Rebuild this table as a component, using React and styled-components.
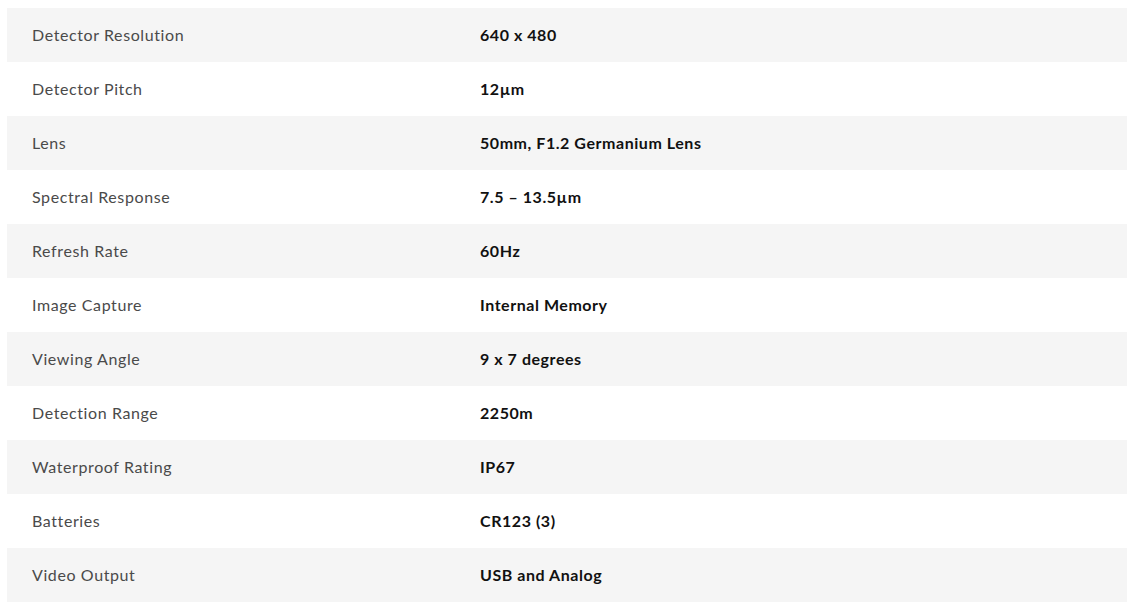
import styled, { createGlobalStyle } from 'styled-components';

const specs = [
	['Detector Resolution', '640 x 480'],
	['Detector Pitch', '12µm'],
	['Lens', '50mm, F1.2 Germanium Lens'],
	['Spectral Response', '7.5 – 13.5µm'],
	['Refresh Rate', '60Hz'],
	['Image Capture', 'Internal Memory'],
	['Viewing Angle', '9 x 7 degrees'],
	['Detection Range', '2250m'],
	['Waterproof Rating', 'IP67'],
	['Batteries', 'CR123 (3)'],
	['Video Output', 'USB and Analog'],
];

const GlobalStyle = createGlobalStyle`
	body {
		margin: 0;
		background: #fff;
		font-family: 'Lato', 'Open Sans', sans-serif;
	}
`;

const Wrapper = styled.div`
	padding: 8px 6px 4px 7px;
`;

const Table = styled.table`
	width: 100%;
	border-collapse: collapse;
	table-layout: fixed;
`;

const Row = styled.tr`
	height: 54px;
	background: ${(props) => (props.$shaded ? '#f5f5f5' : '#fff')};
`;

const Label = styled.td`
	box-sizing: border-box;
	width: 40%;
	padding: 0 25px 2px;
	font-size: 16px;
	font-weight: 400;
	color: #4a4a4a;
	letter-spacing: 0.6px;
`;

const Value = styled.td`
	box-sizing: border-box;
	padding: 0 25px 2px;
	font-size: 16px;
	font-weight: 700;
	color: #111;
	letter-spacing: 0.55px;
`;

export default function App() {
	return (
		<Wrapper>
			<GlobalStyle />
			<Table>
				<tbody>
					{specs.map(([label, value], i) => (
						<Row key={label} $shaded={i % 2 === 0}>
							<Label>{label}</Label>
							<Value>{value}</Value>
						</Row>
					))}
				</tbody>
			</Table>
		</Wrapper>
	);
}
